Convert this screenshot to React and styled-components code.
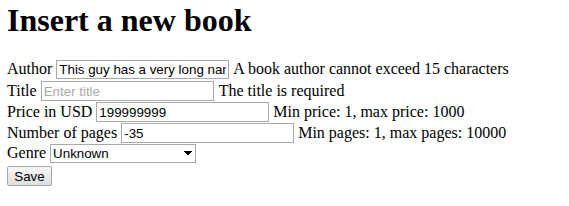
import styled, { createGlobalStyle } from "styled-components";

const GlobalStyle = createGlobalStyle`
  body {
    margin: 0;
    padding: 0 7px;
    font-family: "Liberation Serif", "Times New Roman", serif;
    font-size: 16px;
    color: #000;
    background: #fff;
  }
`;

const Title = styled.h1`
  font-size: 32px;
  font-weight: bold;
  line-height: 37px;
  margin: 2px 0 21px;
`;

const Form = styled.form`
  display: flex;
  flex-direction: column;
`;

const Row = styled.div`
  display: flex;
  align-items: baseline;
  height: 21px;
  white-space: nowrap;
`;

const Label = styled.label`
  margin-right: 4px;
`;

const Hint = styled.span`
  margin-left: ${(p) => p.$gap || 4}px;
`;

const TextInput = styled.input`
  box-sizing: border-box;
  width: 173px;
  height: ${(p) => p.$h || 20}px;
  padding: 1px 2px;
  border: 1px solid #a9a9a9;
  font-family: "Liberation Sans", Arial, sans-serif;
  font-size: 13.33px;
  color: #000;
  outline: none;
  &::placeholder {
    color: #a9a9a9;
  }
`;

const Select = styled.select`
  box-sizing: border-box;
  width: 146px;
  height: 19px;
  padding: 0 2px 0 2px;
  border: 1px solid #a9a9a9;
  border-radius: 0;
  font-family: "Liberation Sans", Arial, sans-serif;
  font-size: 13.33px;
  color: #000;
  background: #fff;
  appearance: none;
  background-image: linear-gradient(45deg, transparent 50%, #000 50%),
    linear-gradient(135deg, #000 50%, transparent 50%);
  background-size: 4px 5px, 4px 5px;
  background-position: 133px 6px, 137px 6px;
  background-repeat: no-repeat;
`;

const Button = styled.button`
  box-sizing: border-box;
  width: 45px;
  height: 20px;
  margin-top: 1px;
  padding: 0;
  border: 1px solid #a6a6a6;
  border-radius: 2px;
  background: linear-gradient(#f6f6f6, #dedede);
  font-family: "Liberation Sans", Arial, sans-serif;
  font-size: 13.33px;
  color: #000;
`;

export default function App() {
  return (
    <>
      <GlobalStyle />
      <Title>Insert a new book</Title>
      <Form onSubmit={(e) => e.preventDefault()}>
        <Row>
          <Label>Author</Label>
          <TextInput defaultValue="This guy has a very long name" $h={19} />
          <Hint>A book author cannot exceed 15 characters</Hint>
        </Row>
        <Row>
          <Label>Title</Label>
          <TextInput placeholder="Enter title" />
          <Hint $gap={5}>The title is required</Hint>
        </Row>
        <Row>
          <Label>Price in USD</Label>
          <TextInput defaultValue="199999999" />
          <Hint>Min price: 1, max price: 1000</Hint>
        </Row>
        <Row>
          <Label>Number of pages</Label>
          <TextInput defaultValue="-35" />
          <Hint>Min pages: 1, max pages: 10000</Hint>
        </Row>
        <Row>
          <Label>Genre</Label>
          <Select defaultValue="unknown">
            <option value="unknown">Unknown</option>
            <option value="fiction">Fiction</option>
            <option value="nonfiction">Non-fiction</option>
          </Select>
        </Row>
        <div>
          <Button type="submit">Save</Button>
        </div>
      </Form>
    </>
  );
}
